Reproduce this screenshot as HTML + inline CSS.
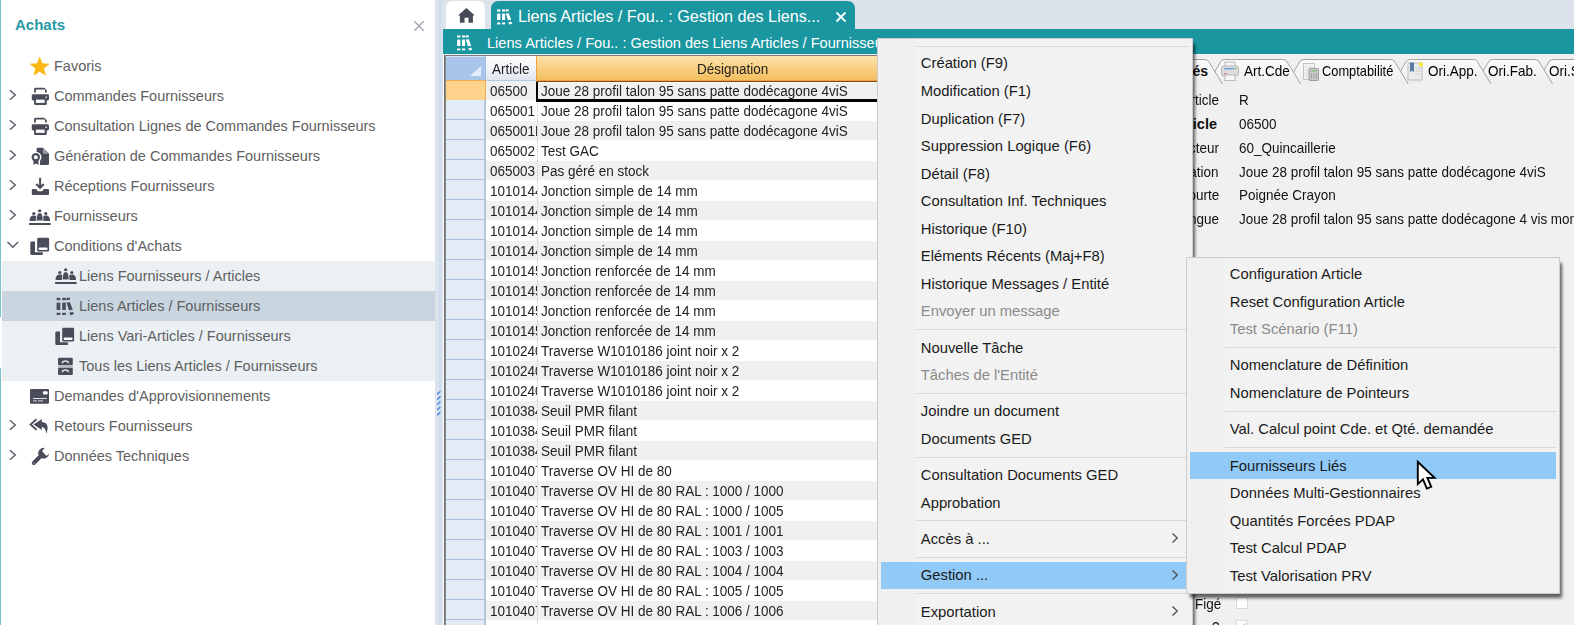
<!DOCTYPE html>
<html><head><meta charset="utf-8">
<style>
*{box-sizing:border-box;margin:0;padding:0}
html,body{width:1574px;height:625px;overflow:hidden;background:#dce3ea;font-family:"Liberation Sans",sans-serif;position:relative}
.abs{position:absolute}
.t{position:absolute;white-space:nowrap;line-height:1}
/* sidebar */
#side{position:absolute;left:0;top:0;width:435px;height:625px;background:#fff}
#side .bl{position:absolute;left:0;width:1px;background:#7cc3c9}
.srow{position:absolute;left:2px;width:433px;height:30px}
.stx{position:absolute;font-size:14.5px;color:#606060;white-space:nowrap;line-height:1}
.chev{position:absolute;left:9px;width:7px;height:7px;border-right:1.6px solid #5a5e68;border-bottom:1.6px solid #5a5e68}
/* splitter */
#split{position:absolute;left:435px;top:0;width:9px;height:625px;background:#dce3ea}
/* tabs */
/* grid */
/* right panel */
/* menus */
.mi{position:absolute;font-size:14.8px;color:#1a1a1a;white-space:nowrap;line-height:1}
.mi.dis{color:#8a8a8a}
.sep{position:absolute;height:1px;background:#d7d7d7}
.gtx{font-size:15.5px;color:#222;transform:scaleX(0.87);transform-origin:0 0}
.rtx{font-size:14.5px;color:#111;transform:scaleX(0.93);transform-origin:0 0}
.hl{position:absolute;background:#91c9f7}
</style></head><body>

<div id="side">
  <div class="bl" style="top:0;height:317px"></div>
  <div class="bl" style="top:368px;height:257px"></div>
  <div class="t" style="left:15px;top:17px;font-size:15px;font-weight:bold;color:#2799a6">Achats</div>
<svg class="abs" style="left:413px;top:20px" width="12" height="12" viewBox="0 0 12 12"><path d="M1.3 1.3 L10.7 10.7 M10.7 1.3 L1.3 10.7" stroke="#9da3aa" stroke-width="1.3"/></svg>
<!--SIDE-->
<div class="srow" style="top:51px;">
<svg class="abs" style="left:26px;top:4px" width="26" height="24" viewBox="0 0 26 24"><path d="M11.65 2.50 L14.06 8.78 L20.78 9.13 L15.55 13.37 L17.29 19.87 L11.65 16.20 L6.01 19.87 L7.75 13.37 L2.52 9.13 L9.24 8.78 Z" fill="#fbb713" stroke="#fbb713" stroke-width="0.9" stroke-linejoin="round"/></svg>
<div class="stx" style="left:52px;top:0;line-height:30px">Favoris</div>
</div>
<div class="srow" style="top:81px;">
<svg class="abs" style="left:5px;top:7px" width="12" height="14" viewBox="0 0 12 14"><path d="M2.8 2.3 L8.3 7 L2.8 11.7" fill="none" stroke="#5b5e6a" stroke-width="1.5"/></svg>
<svg class="abs" style="left:26px;top:4px" width="26" height="24" viewBox="0 0 26 24"><path d="M6.1 7.5V4.2a1.4 1.4 0 0 1 1.4-1.4h8.8l2.5 2.5v2.2h-1.8V4.6H7.9v2.9z" fill="#4a4d59"/><rect x="3.8" y="9.2" width="17.2" height="6.2" rx="1.4" fill="#4a4d59"/><rect x="17.4" y="11.4" width="1.6" height="1.6" fill="#c8cad0"/><path d="M6.1 14.5h12.7v4.3a1.2 1.2 0 0 1-1.2 1.2H7.3a1.2 1.2 0 0 1-1.2-1.2z" fill="#4a4d59"/><rect x="8" y="14.6" width="8.6" height="3.3" fill="#fff"/></svg>
<div class="stx" style="left:52px;top:0;line-height:30px">Commandes Fournisseurs</div>
</div>
<div class="srow" style="top:111px;">
<svg class="abs" style="left:5px;top:7px" width="12" height="14" viewBox="0 0 12 14"><path d="M2.8 2.3 L8.3 7 L2.8 11.7" fill="none" stroke="#5b5e6a" stroke-width="1.5"/></svg>
<svg class="abs" style="left:26px;top:4px" width="26" height="24" viewBox="0 0 26 24"><path d="M6.1 7.5V4.2a1.4 1.4 0 0 1 1.4-1.4h8.8l2.5 2.5v2.2h-1.8V4.6H7.9v2.9z" fill="#4a4d59"/><rect x="3.8" y="9.2" width="17.2" height="6.2" rx="1.4" fill="#4a4d59"/><rect x="17.4" y="11.4" width="1.6" height="1.6" fill="#c8cad0"/><path d="M6.1 14.5h12.7v4.3a1.2 1.2 0 0 1-1.2 1.2H7.3a1.2 1.2 0 0 1-1.2-1.2z" fill="#4a4d59"/><rect x="8" y="14.6" width="8.6" height="3.3" fill="#fff"/></svg>
<div class="stx" style="left:52px;top:0;line-height:30px">Consultation Lignes de Commandes Fournisseurs</div>
</div>
<div class="srow" style="top:141px;">
<svg class="abs" style="left:5px;top:7px" width="12" height="14" viewBox="0 0 12 14"><path d="M2.8 2.3 L8.3 7 L2.8 11.7" fill="none" stroke="#5b5e6a" stroke-width="1.5"/></svg>
<svg class="abs" style="left:26px;top:4px" width="26" height="24" viewBox="0 0 26 24"><mask id="mgen"><rect width="24" height="24" fill="#fff"/><circle cx="7.8" cy="12.3" r="5.6" fill="#000"/><path d="M4 15 L4 21 L12 21 L12 15z" fill="#000"/></mask><path d="M9.8 2.7h5.2l6 6.1v10a1.2 1.2 0 0 1-1.2 1.2H9.8a1.2 1.2 0 0 1-1.2-1.2v-14.9a1.2 1.2 0 0 1 1.2-1.2z" fill="#4a4d59" mask="url(#mgen)"/><path d="M15 2.9v4.8a1 1 0 0 0 1 1h4.8z" fill="#9a9ca5"/><circle cx="7.8" cy="12.3" r="4.2" fill="#4a4d59"/><circle cx="7.8" cy="12.3" r="2" fill="#fff"/><path d="M5.5 15.5 L5.5 20 L8 18.6 L10.5 20 L10.5 15.5z" fill="#4a4d59"/></svg>
<div class="stx" style="left:52px;top:0;line-height:30px">Génération de Commandes Fournisseurs</div>
</div>
<div class="srow" style="top:171px;">
<svg class="abs" style="left:5px;top:7px" width="12" height="14" viewBox="0 0 12 14"><path d="M2.8 2.3 L8.3 7 L2.8 11.7" fill="none" stroke="#5b5e6a" stroke-width="1.5"/></svg>
<svg class="abs" style="left:26px;top:4px" width="26" height="24" viewBox="0 0 26 24"><rect x="11.1" y="2.8" width="2" height="9.5" fill="#4a4d59"/><path d="M8.3 9 L12.1 12.8 L15.8 9" fill="none" stroke="#4a4d59" stroke-width="2.1"/><path d="M4.8 14h3.4l1.6 2.3h4.4l1.6-2.3h4.2a1 1 0 0 1 1 1v4a1 1 0 0 1-1 1H4.8a1 1 0 0 1-1-1v-4a1 1 0 0 1 1-1z" fill="#4a4d59"/></svg>
<div class="stx" style="left:52px;top:0;line-height:30px">Réceptions Fournisseurs</div>
</div>
<div class="srow" style="top:201px;">
<svg class="abs" style="left:5px;top:7px" width="12" height="14" viewBox="0 0 12 14"><path d="M2.8 2.3 L8.3 7 L2.8 11.7" fill="none" stroke="#5b5e6a" stroke-width="1.5"/></svg>
<svg class="abs" style="left:24.5px;top:4.5px" width="26" height="24" viewBox="0 0 26 24"><rect x="1.9" y="16.9" width="21.9" height="2.1" rx=".8" fill="#4a4d59"/><rect x="11.2" y="3.4" width="3" height="2.7" rx=".6" fill="#4a4d59"/><circle cx="6.8" cy="7.5" r="1.6" fill="#4a4d59"/><circle cx="18.8" cy="7.5" r="1.6" fill="#4a4d59"/><path d="M2.6 14.9 C2.6 11 4.2 9.6 6.8 9.6 S11 11 11 14.9z" fill="#4a4d59"/><path d="M14.6 14.9 C14.6 11 16.2 9.6 18.8 9.6 S23 11 23 14.9z" fill="#4a4d59"/><path d="M9.3 14.9 C9.3 9.2 10.5 6.7 12.7 6.7 S16.1 9.2 16.1 14.9z" fill="#4a4d59" stroke="#fff" stroke-width="0.8"/></svg>
<div class="stx" style="left:52px;top:0;line-height:30px">Fournisseurs</div>
</div>
<div class="srow" style="top:231px;">
<svg class="abs" style="left:4px;top:9px" width="14" height="10" viewBox="0 0 14 10"><path d="M1.5 2 L6.8 7.2 L12.1 2" fill="none" stroke="#5b5e6a" stroke-width="1.5"/></svg>
<svg class="abs" style="left:26px;top:4px" width="26" height="24" viewBox="0 0 26 24"><rect x="9.2" y="2.8" width="11.9" height="13.7" rx="1.3" fill="#4a4d59"/><rect x="10.6" y="12.5" width="9" height="2.4" rx="1.2" fill="#fff"/><path d="M3.6 6.5h3.4v10.8h7.8v2.7H3.9a1.6 1.6 0 0 1-1.6-1.6V7.8a1.3 1.3 0 0 1 1.3-1.3z" fill="#4a4d59"/></svg>
<div class="stx" style="left:52px;top:0;line-height:30px">Conditions d'Achats</div>
</div>
<div class="srow" style="top:261px;background:#ebf0f4;">
<svg class="abs" style="left:51px;top:4px" width="26" height="24" viewBox="0 0 26 24"><rect x="1.9" y="16.9" width="21.9" height="2.1" rx=".8" fill="#4a4d59"/><rect x="11.2" y="3.4" width="3" height="2.7" rx=".6" fill="#4a4d59"/><circle cx="6.8" cy="7.5" r="1.6" fill="#4a4d59"/><circle cx="18.8" cy="7.5" r="1.6" fill="#4a4d59"/><path d="M2.6 14.9 C2.6 11 4.2 9.6 6.8 9.6 S11 11 11 14.9z" fill="#4a4d59"/><path d="M14.6 14.9 C14.6 11 16.2 9.6 18.8 9.6 S23 11 23 14.9z" fill="#4a4d59"/><path d="M9.3 14.9 C9.3 9.2 10.5 6.7 12.7 6.7 S16.1 9.2 16.1 14.9z" fill="#4a4d59" stroke="#fff" stroke-width="0.8"/></svg>
<div class="stx" style="left:77px;top:0;line-height:30px">Liens Fournisseurs / Articles</div>
</div>
<div class="srow" style="top:291px;background:#c9d6e0;">
<svg class="abs" style="left:51px;top:4px" width="26" height="24" viewBox="0 0 26 24"><g fill="#4a4d59"><rect x="3.6" y="2.8" width="3.7" height="2.4"/><rect x="3.6" y="7.6" width="3.7" height="7.4"/><rect x="3.6" y="17.8" width="3.7" height="2.2"/><rect x="9.2" y="2.8" width="3.6" height="2.4"/><rect x="9.2" y="7.6" width="3.6" height="7.4"/><rect x="9.2" y="17.8" width="3.6" height="2.2"/><path d="M13.2 2.9 L16.6 2.5 L17.2 4.8 L13.5 5.3z"/><path d="M13.5 7.6 L17 7.2 L19.8 14.8 L16 15.2z"/><path d="M16.5 17.6 L20 16.9 L20.9 19.3 L17.3 20.2z"/></g></svg>
<div class="stx" style="left:77px;top:0;line-height:30px">Liens Articles / Fournisseurs</div>
</div>
<div class="srow" style="top:321px;background:#ebf0f4;">
<svg class="abs" style="left:50.5px;top:3.5px" width="26" height="24" viewBox="0 0 26 24"><rect x="9.2" y="2.8" width="11.9" height="13.7" rx="1.3" fill="#4a4d59"/><rect x="10.6" y="12.5" width="9" height="2.4" rx="1.2" fill="#fff"/><path d="M3.6 6.5h3.4v10.8h7.8v2.7H3.9a1.6 1.6 0 0 1-1.6-1.6V7.8a1.3 1.3 0 0 1 1.3-1.3z" fill="#4a4d59"/></svg>
<div class="stx" style="left:77px;top:0;line-height:30px">Liens Vari-Articles / Fournisseurs</div>
</div>
<div class="srow" style="top:351px;background:#ebf0f4;">
<svg class="abs" style="left:51px;top:4px" width="26" height="24" viewBox="0 0 26 24"><rect x="5" y="2.8" width="14.8" height="7.4" rx="1.2" fill="#4a4d59"/><rect x="5" y="12.6" width="14.8" height="7.3" rx="1.2" fill="#4a4d59"/><rect x="5" y="10.2" width="14.8" height="2.4" fill="#b6bac2"/><path d="M9.3 8.2 Q9.3 6 12.4 6 T15.5 8.2" fill="none" stroke="#d9dbe0" stroke-width="1.4"/><path d="M9.3 17.3 Q9.3 15 12.4 15 T15.5 17.3" fill="none" stroke="#d9dbe0" stroke-width="1.4"/></svg>
<div class="stx" style="left:77px;top:0;line-height:30px">Tous les Liens Articles / Fournisseurs</div>
</div>
<div class="srow" style="top:381px;">
<svg class="abs" style="left:26px;top:4px" width="26" height="24" viewBox="0 0 26 24"><rect x="2" y="4" width="19" height="14.8" rx="1.2" fill="#4a4d59"/><rect x="14.9" y="6.3" width="4.8" height="3.1" rx="1.2" fill="#fff"/><rect x="5.1" y="13" width="13.5" height="1" fill="#e8e9ec"/><rect x="5.1" y="15.1" width="3.9" height="1.5" fill="#a9abb3"/><rect x="10" y="15.1" width="5" height="1.5" fill="#a9abb3"/></svg>
<div class="stx" style="left:52px;top:0;line-height:30px">Demandes d'Approvisionnements</div>
</div>
<div class="srow" style="top:411px;">
<svg class="abs" style="left:5px;top:7px" width="12" height="14" viewBox="0 0 12 14"><path d="M2.8 2.3 L8.3 7 L2.8 11.7" fill="none" stroke="#5b5e6a" stroke-width="1.5"/></svg>
<svg class="abs" style="left:26px;top:4px" width="26" height="24" viewBox="0 0 26 24"><path d="M8.6 4.1 L2.6 9.5 L8.6 14.9" fill="none" stroke="#4a4d59" stroke-width="1.9"/><path d="M5.6 9.5 L13.8 3.9 L13.8 7.1 C18.5 7.3 21.5 10.5 18.4 18.8 C17.8 14.5 16.5 12.3 13.8 12 L13.8 15.1 Z" fill="#4a4d59"/></svg>
<div class="stx" style="left:52px;top:0;line-height:30px">Retours Fournisseurs</div>
</div>
<div class="srow" style="top:441px;">
<svg class="abs" style="left:5px;top:7px" width="12" height="14" viewBox="0 0 12 14"><path d="M2.8 2.3 L8.3 7 L2.8 11.7" fill="none" stroke="#5b5e6a" stroke-width="1.5"/></svg>
<svg class="abs" style="left:26px;top:4px" width="26" height="24" viewBox="0 0 26 24"><mask id="mwr"><rect width="24" height="24" fill="#fff"/><path d="M17.6 2 L22.5 7 L18.5 11 L14 6z" fill="#000" transform="rotate(0)"/></mask><g mask="url(#mwr)"><circle cx="15.6" cy="8.2" r="5.4" fill="#4a4d59"/></g><path d="M13.3 10.5 L5.8 18" stroke="#4a4d59" stroke-width="4" stroke-linecap="round"/><circle cx="5.8" cy="18" r=".8" fill="#9a9ca5"/></svg>
<div class="stx" style="left:52px;top:0;line-height:30px">Données Techniques</div>
</div>
<!--/SIDE-->
</div>

<div id="split"><div class="abs" style="left:4px;top:0;width:1.5px;height:625px;background:#c9dcf3"></div>
<svg class="abs" style="left:1px;top:390px" width="6" height="26" viewBox="0 0 6 26"><g stroke="#3d7ee0" stroke-width="1.3" stroke-linecap="round"><path d="M1.5 4 L4 1.6"/><path d="M1.5 9.2 L4 6.8"/><path d="M1.5 14.4 L4 12"/><path d="M1.5 19.6 L4 17.2"/><path d="M1.5 24.8 L4 22.4"/></g></svg></div>

<!--TOP-->
<div class="abs" style="left:446px;top:1px;width:39px;height:28px;background:#fff;border-radius:6px 6px 0 0"></div>
<svg class="abs" style="left:457px;top:7px" width="19" height="17" viewBox="0 0 19 17"><path d="M9.4 1 L17.8 8.6 L15.9 8.6 L15.9 15.8 L11.5 15.8 L11.5 10.8 L7.6 10.8 L7.6 15.8 L2.9 15.8 L2.9 8.6 L1 8.6 Z" fill="#474b57"/></svg>
<div class="abs" style="left:491px;top:1px;width:364px;height:28px;background:#1a96a0;border-radius:7px 7px 0 0"></div>
<svg class="abs" style="left:494px;top:6.7px" width="20" height="20" viewBox="0 0 23 23"><g fill="#fff"><rect x="3.6" y="2.8" width="3.7" height="2.4"/><rect x="3.6" y="7.6" width="3.7" height="7.4"/><rect x="3.6" y="17.8" width="3.7" height="2.2"/><rect x="9.2" y="2.8" width="3.6" height="2.4"/><rect x="9.2" y="7.6" width="3.6" height="7.4"/><rect x="9.2" y="17.8" width="3.6" height="2.2"/><path d="M13.2 2.9 L16.6 2.5 L17.2 4.8 L13.5 5.3z"/><path d="M13.5 7.6 L17 7.2 L19.8 14.8 L16 15.2z"/><path d="M16.5 17.6 L20 16.9 L20.9 19.3 L17.3 20.2z"/></g></svg>
<div class="t" style="left:518px;top:8px;font-size:16.2px;color:#fff">Liens Articles / Fou.. : Gestion des Liens...</div>
<svg class="abs" style="left:835px;top:11px" width="12" height="12" viewBox="0 0 12 12"><path d="M1.5 1.5 L10.5 10.5 M10.5 1.5 L1.5 10.5" stroke="#fff" stroke-width="1.8"/></svg>
<div class="abs" style="left:443px;top:29px;width:1131px;height:25px;background:#1a96a0"></div>
<svg class="abs" style="left:454px;top:33.1px" width="20" height="20" viewBox="0 0 23 23"><g fill="#fff"><rect x="3.6" y="2.8" width="3.7" height="2.4"/><rect x="3.6" y="7.6" width="3.7" height="7.4"/><rect x="3.6" y="17.8" width="3.7" height="2.2"/><rect x="9.2" y="2.8" width="3.6" height="2.4"/><rect x="9.2" y="7.6" width="3.6" height="7.4"/><rect x="9.2" y="17.8" width="3.6" height="2.2"/><path d="M13.2 2.9 L16.6 2.5 L17.2 4.8 L13.5 5.3z"/><path d="M13.5 7.6 L17 7.2 L19.8 14.8 L16 15.2z"/><path d="M16.5 17.6 L20 16.9 L20.9 19.3 L17.3 20.2z"/></g></svg>
<div class="t" style="left:487px;top:36px;font-size:14.6px;color:#fff">Liens Articles / Fou.. : Gestion des Liens Articles / Fournisseurs</div>
<!--/TOP-->

<!--GRID-->
<div id="grid" style="position:absolute;left:443px;top:54px;width:450px;height:571px;overflow:hidden;background:#fff">
<div class="abs" style="left:0;top:0;width:450px;height:1px;background:#e9eef2"></div>
<div class="abs" style="left:1px;top:1px;width:449px;height:1px;background:#7c7c7c"></div>
<div class="abs" style="left:1px;top:1px;width:2px;height:570px;background:#8a8a8a"></div>
<div class="abs" style="left:1px;top:1px;width:1px;height:570px;background:#6e6e6e"></div>
<div class="abs" style="left:43px;top:27px;width:410px;height:19px;background:#f0f0f0"></div>
<div class="abs" style="left:3px;top:26px;width:40px;height:20px;background:#fdd38b;border-top:1px solid #f4ab52;border-right:1px solid #f4ab52"></div>
<div class="abs" style="left:47px;top:26px;width:47px;height:20px;overflow:hidden"><div class="t gtx" style="left:0;top:3.3px">06500</div></div>
<div class="t gtx" style="left:97.6px;top:29.3px">Joue 28 profil talon 95 sans patte dodécagone 4viS</div>
<div class="abs" style="left:94px;top:26px;width:1px;height:20px;border-left:1px dotted #c8c8c8"></div>
<div class="abs" style="left:43px;top:47px;width:410px;height:19px;background:#ffffff"></div>
<div class="abs" style="left:3px;top:46px;width:40px;height:20px;background:#e3ebf7;border-bottom:1px solid #a8c0dd;border-right:2px solid #b3c6dc"></div>
<div class="abs" style="left:47px;top:46px;width:47px;height:20px;overflow:hidden"><div class="t gtx" style="left:0;top:3.3px">065001</div></div>
<div class="t gtx" style="left:97.6px;top:49.3px">Joue 28 profil talon 95 sans patte dodécagone 4viS</div>
<div class="abs" style="left:94px;top:46px;width:1px;height:20px;border-left:1px dotted #c8c8c8"></div>
<div class="abs" style="left:43px;top:67px;width:410px;height:19px;background:#f0f0f0"></div>
<div class="abs" style="left:3px;top:66px;width:40px;height:20px;background:#e3ebf7;border-bottom:1px solid #a8c0dd;border-right:2px solid #b3c6dc"></div>
<div class="abs" style="left:47px;top:66px;width:47px;height:20px;overflow:hidden"><div class="t gtx" style="left:0;top:3.3px">065001B</div></div>
<div class="t gtx" style="left:97.6px;top:69.3px">Joue 28 profil talon 95 sans patte dodécagone 4viS</div>
<div class="abs" style="left:94px;top:66px;width:1px;height:20px;border-left:1px dotted #c8c8c8"></div>
<div class="abs" style="left:43px;top:87px;width:410px;height:19px;background:#ffffff"></div>
<div class="abs" style="left:3px;top:86px;width:40px;height:20px;background:#e3ebf7;border-bottom:1px solid #a8c0dd;border-right:2px solid #b3c6dc"></div>
<div class="abs" style="left:47px;top:86px;width:47px;height:20px;overflow:hidden"><div class="t gtx" style="left:0;top:3.3px">065002</div></div>
<div class="t gtx" style="left:97.6px;top:89.3px">Test GAC</div>
<div class="abs" style="left:94px;top:86px;width:1px;height:20px;border-left:1px dotted #c8c8c8"></div>
<div class="abs" style="left:43px;top:107px;width:410px;height:19px;background:#f0f0f0"></div>
<div class="abs" style="left:3px;top:106px;width:40px;height:20px;background:#e3ebf7;border-bottom:1px solid #a8c0dd;border-right:2px solid #b3c6dc"></div>
<div class="abs" style="left:47px;top:106px;width:47px;height:20px;overflow:hidden"><div class="t gtx" style="left:0;top:3.3px">065003</div></div>
<div class="t gtx" style="left:97.6px;top:109.3px">Pas géré en stock</div>
<div class="abs" style="left:94px;top:106px;width:1px;height:20px;border-left:1px dotted #c8c8c8"></div>
<div class="abs" style="left:43px;top:127px;width:410px;height:19px;background:#ffffff"></div>
<div class="abs" style="left:3px;top:126px;width:40px;height:20px;background:#e3ebf7;border-bottom:1px solid #a8c0dd;border-right:2px solid #b3c6dc"></div>
<div class="abs" style="left:47px;top:126px;width:47px;height:20px;overflow:hidden"><div class="t gtx" style="left:0;top:3.3px">1010144</div></div>
<div class="t gtx" style="left:97.6px;top:129.3px">Jonction simple de 14 mm</div>
<div class="abs" style="left:94px;top:126px;width:1px;height:20px;border-left:1px dotted #c8c8c8"></div>
<div class="abs" style="left:43px;top:147px;width:410px;height:19px;background:#f0f0f0"></div>
<div class="abs" style="left:3px;top:146px;width:40px;height:20px;background:#e3ebf7;border-bottom:1px solid #a8c0dd;border-right:2px solid #b3c6dc"></div>
<div class="abs" style="left:47px;top:146px;width:47px;height:20px;overflow:hidden"><div class="t gtx" style="left:0;top:3.3px">1010144</div></div>
<div class="t gtx" style="left:97.6px;top:149.3px">Jonction simple de 14 mm</div>
<div class="abs" style="left:94px;top:146px;width:1px;height:20px;border-left:1px dotted #c8c8c8"></div>
<div class="abs" style="left:43px;top:167px;width:410px;height:19px;background:#ffffff"></div>
<div class="abs" style="left:3px;top:166px;width:40px;height:20px;background:#e3ebf7;border-bottom:1px solid #a8c0dd;border-right:2px solid #b3c6dc"></div>
<div class="abs" style="left:47px;top:166px;width:47px;height:20px;overflow:hidden"><div class="t gtx" style="left:0;top:3.3px">1010144</div></div>
<div class="t gtx" style="left:97.6px;top:169.3px">Jonction simple de 14 mm</div>
<div class="abs" style="left:94px;top:166px;width:1px;height:20px;border-left:1px dotted #c8c8c8"></div>
<div class="abs" style="left:43px;top:187px;width:410px;height:19px;background:#f0f0f0"></div>
<div class="abs" style="left:3px;top:186px;width:40px;height:20px;background:#e3ebf7;border-bottom:1px solid #a8c0dd;border-right:2px solid #b3c6dc"></div>
<div class="abs" style="left:47px;top:186px;width:47px;height:20px;overflow:hidden"><div class="t gtx" style="left:0;top:3.3px">1010144</div></div>
<div class="t gtx" style="left:97.6px;top:189.3px">Jonction simple de 14 mm</div>
<div class="abs" style="left:94px;top:186px;width:1px;height:20px;border-left:1px dotted #c8c8c8"></div>
<div class="abs" style="left:43px;top:207px;width:410px;height:19px;background:#ffffff"></div>
<div class="abs" style="left:3px;top:206px;width:40px;height:20px;background:#e3ebf7;border-bottom:1px solid #a8c0dd;border-right:2px solid #b3c6dc"></div>
<div class="abs" style="left:47px;top:206px;width:47px;height:20px;overflow:hidden"><div class="t gtx" style="left:0;top:3.3px">1010145</div></div>
<div class="t gtx" style="left:97.6px;top:209.3px">Jonction renforcée de 14 mm</div>
<div class="abs" style="left:94px;top:206px;width:1px;height:20px;border-left:1px dotted #c8c8c8"></div>
<div class="abs" style="left:43px;top:227px;width:410px;height:19px;background:#f0f0f0"></div>
<div class="abs" style="left:3px;top:226px;width:40px;height:20px;background:#e3ebf7;border-bottom:1px solid #a8c0dd;border-right:2px solid #b3c6dc"></div>
<div class="abs" style="left:47px;top:226px;width:47px;height:20px;overflow:hidden"><div class="t gtx" style="left:0;top:3.3px">1010145</div></div>
<div class="t gtx" style="left:97.6px;top:229.3px">Jonction renforcée de 14 mm</div>
<div class="abs" style="left:94px;top:226px;width:1px;height:20px;border-left:1px dotted #c8c8c8"></div>
<div class="abs" style="left:43px;top:247px;width:410px;height:19px;background:#ffffff"></div>
<div class="abs" style="left:3px;top:246px;width:40px;height:20px;background:#e3ebf7;border-bottom:1px solid #a8c0dd;border-right:2px solid #b3c6dc"></div>
<div class="abs" style="left:47px;top:246px;width:47px;height:20px;overflow:hidden"><div class="t gtx" style="left:0;top:3.3px">1010145</div></div>
<div class="t gtx" style="left:97.6px;top:249.3px">Jonction renforcée de 14 mm</div>
<div class="abs" style="left:94px;top:246px;width:1px;height:20px;border-left:1px dotted #c8c8c8"></div>
<div class="abs" style="left:43px;top:267px;width:410px;height:19px;background:#f0f0f0"></div>
<div class="abs" style="left:3px;top:266px;width:40px;height:20px;background:#e3ebf7;border-bottom:1px solid #a8c0dd;border-right:2px solid #b3c6dc"></div>
<div class="abs" style="left:47px;top:266px;width:47px;height:20px;overflow:hidden"><div class="t gtx" style="left:0;top:3.3px">1010145</div></div>
<div class="t gtx" style="left:97.6px;top:269.3px">Jonction renforcée de 14 mm</div>
<div class="abs" style="left:94px;top:266px;width:1px;height:20px;border-left:1px dotted #c8c8c8"></div>
<div class="abs" style="left:43px;top:287px;width:410px;height:19px;background:#ffffff"></div>
<div class="abs" style="left:3px;top:286px;width:40px;height:20px;background:#e3ebf7;border-bottom:1px solid #a8c0dd;border-right:2px solid #b3c6dc"></div>
<div class="abs" style="left:47px;top:286px;width:47px;height:20px;overflow:hidden"><div class="t gtx" style="left:0;top:3.3px">1010240</div></div>
<div class="t gtx" style="left:97.6px;top:289.3px">Traverse W1010186 joint noir x 2</div>
<div class="abs" style="left:94px;top:286px;width:1px;height:20px;border-left:1px dotted #c8c8c8"></div>
<div class="abs" style="left:43px;top:307px;width:410px;height:19px;background:#f0f0f0"></div>
<div class="abs" style="left:3px;top:306px;width:40px;height:20px;background:#e3ebf7;border-bottom:1px solid #a8c0dd;border-right:2px solid #b3c6dc"></div>
<div class="abs" style="left:47px;top:306px;width:47px;height:20px;overflow:hidden"><div class="t gtx" style="left:0;top:3.3px">1010240</div></div>
<div class="t gtx" style="left:97.6px;top:309.3px">Traverse W1010186 joint noir x 2</div>
<div class="abs" style="left:94px;top:306px;width:1px;height:20px;border-left:1px dotted #c8c8c8"></div>
<div class="abs" style="left:43px;top:327px;width:410px;height:19px;background:#ffffff"></div>
<div class="abs" style="left:3px;top:326px;width:40px;height:20px;background:#e3ebf7;border-bottom:1px solid #a8c0dd;border-right:2px solid #b3c6dc"></div>
<div class="abs" style="left:47px;top:326px;width:47px;height:20px;overflow:hidden"><div class="t gtx" style="left:0;top:3.3px">1010240</div></div>
<div class="t gtx" style="left:97.6px;top:329.3px">Traverse W1010186 joint noir x 2</div>
<div class="abs" style="left:94px;top:326px;width:1px;height:20px;border-left:1px dotted #c8c8c8"></div>
<div class="abs" style="left:43px;top:347px;width:410px;height:19px;background:#f0f0f0"></div>
<div class="abs" style="left:3px;top:346px;width:40px;height:20px;background:#e3ebf7;border-bottom:1px solid #a8c0dd;border-right:2px solid #b3c6dc"></div>
<div class="abs" style="left:47px;top:346px;width:47px;height:20px;overflow:hidden"><div class="t gtx" style="left:0;top:3.3px">1010384</div></div>
<div class="t gtx" style="left:97.6px;top:349.3px">Seuil PMR filant</div>
<div class="abs" style="left:94px;top:346px;width:1px;height:20px;border-left:1px dotted #c8c8c8"></div>
<div class="abs" style="left:43px;top:367px;width:410px;height:19px;background:#ffffff"></div>
<div class="abs" style="left:3px;top:366px;width:40px;height:20px;background:#e3ebf7;border-bottom:1px solid #a8c0dd;border-right:2px solid #b3c6dc"></div>
<div class="abs" style="left:47px;top:366px;width:47px;height:20px;overflow:hidden"><div class="t gtx" style="left:0;top:3.3px">1010384</div></div>
<div class="t gtx" style="left:97.6px;top:369.3px">Seuil PMR filant</div>
<div class="abs" style="left:94px;top:366px;width:1px;height:20px;border-left:1px dotted #c8c8c8"></div>
<div class="abs" style="left:43px;top:387px;width:410px;height:19px;background:#f0f0f0"></div>
<div class="abs" style="left:3px;top:386px;width:40px;height:20px;background:#e3ebf7;border-bottom:1px solid #a8c0dd;border-right:2px solid #b3c6dc"></div>
<div class="abs" style="left:47px;top:386px;width:47px;height:20px;overflow:hidden"><div class="t gtx" style="left:0;top:3.3px">1010384</div></div>
<div class="t gtx" style="left:97.6px;top:389.3px">Seuil PMR filant</div>
<div class="abs" style="left:94px;top:386px;width:1px;height:20px;border-left:1px dotted #c8c8c8"></div>
<div class="abs" style="left:43px;top:407px;width:410px;height:19px;background:#ffffff"></div>
<div class="abs" style="left:3px;top:406px;width:40px;height:20px;background:#e3ebf7;border-bottom:1px solid #a8c0dd;border-right:2px solid #b3c6dc"></div>
<div class="abs" style="left:47px;top:406px;width:47px;height:20px;overflow:hidden"><div class="t gtx" style="left:0;top:3.3px">1010407</div></div>
<div class="t gtx" style="left:97.6px;top:409.3px">Traverse OV HI de 80</div>
<div class="abs" style="left:94px;top:406px;width:1px;height:20px;border-left:1px dotted #c8c8c8"></div>
<div class="abs" style="left:43px;top:427px;width:410px;height:19px;background:#f0f0f0"></div>
<div class="abs" style="left:3px;top:426px;width:40px;height:20px;background:#e3ebf7;border-bottom:1px solid #a8c0dd;border-right:2px solid #b3c6dc"></div>
<div class="abs" style="left:47px;top:426px;width:47px;height:20px;overflow:hidden"><div class="t gtx" style="left:0;top:3.3px">1010407</div></div>
<div class="t gtx" style="left:97.6px;top:429.3px">Traverse OV HI de 80 RAL : 1000 / 1000</div>
<div class="abs" style="left:94px;top:426px;width:1px;height:20px;border-left:1px dotted #c8c8c8"></div>
<div class="abs" style="left:43px;top:447px;width:410px;height:19px;background:#ffffff"></div>
<div class="abs" style="left:3px;top:446px;width:40px;height:20px;background:#e3ebf7;border-bottom:1px solid #a8c0dd;border-right:2px solid #b3c6dc"></div>
<div class="abs" style="left:47px;top:446px;width:47px;height:20px;overflow:hidden"><div class="t gtx" style="left:0;top:3.3px">1010407</div></div>
<div class="t gtx" style="left:97.6px;top:449.3px">Traverse OV HI de 80 RAL : 1000 / 1005</div>
<div class="abs" style="left:94px;top:446px;width:1px;height:20px;border-left:1px dotted #c8c8c8"></div>
<div class="abs" style="left:43px;top:467px;width:410px;height:19px;background:#f0f0f0"></div>
<div class="abs" style="left:3px;top:466px;width:40px;height:20px;background:#e3ebf7;border-bottom:1px solid #a8c0dd;border-right:2px solid #b3c6dc"></div>
<div class="abs" style="left:47px;top:466px;width:47px;height:20px;overflow:hidden"><div class="t gtx" style="left:0;top:3.3px">1010407</div></div>
<div class="t gtx" style="left:97.6px;top:469.3px">Traverse OV HI de 80 RAL : 1001 / 1001</div>
<div class="abs" style="left:94px;top:466px;width:1px;height:20px;border-left:1px dotted #c8c8c8"></div>
<div class="abs" style="left:43px;top:487px;width:410px;height:19px;background:#ffffff"></div>
<div class="abs" style="left:3px;top:486px;width:40px;height:20px;background:#e3ebf7;border-bottom:1px solid #a8c0dd;border-right:2px solid #b3c6dc"></div>
<div class="abs" style="left:47px;top:486px;width:47px;height:20px;overflow:hidden"><div class="t gtx" style="left:0;top:3.3px">1010407</div></div>
<div class="t gtx" style="left:97.6px;top:489.3px">Traverse OV HI de 80 RAL : 1003 / 1003</div>
<div class="abs" style="left:94px;top:486px;width:1px;height:20px;border-left:1px dotted #c8c8c8"></div>
<div class="abs" style="left:43px;top:507px;width:410px;height:19px;background:#f0f0f0"></div>
<div class="abs" style="left:3px;top:506px;width:40px;height:20px;background:#e3ebf7;border-bottom:1px solid #a8c0dd;border-right:2px solid #b3c6dc"></div>
<div class="abs" style="left:47px;top:506px;width:47px;height:20px;overflow:hidden"><div class="t gtx" style="left:0;top:3.3px">1010407</div></div>
<div class="t gtx" style="left:97.6px;top:509.3px">Traverse OV HI de 80 RAL : 1004 / 1004</div>
<div class="abs" style="left:94px;top:506px;width:1px;height:20px;border-left:1px dotted #c8c8c8"></div>
<div class="abs" style="left:43px;top:527px;width:410px;height:19px;background:#ffffff"></div>
<div class="abs" style="left:3px;top:526px;width:40px;height:20px;background:#e3ebf7;border-bottom:1px solid #a8c0dd;border-right:2px solid #b3c6dc"></div>
<div class="abs" style="left:47px;top:526px;width:47px;height:20px;overflow:hidden"><div class="t gtx" style="left:0;top:3.3px">1010407</div></div>
<div class="t gtx" style="left:97.6px;top:529.3px">Traverse OV HI de 80 RAL : 1005 / 1005</div>
<div class="abs" style="left:94px;top:526px;width:1px;height:20px;border-left:1px dotted #c8c8c8"></div>
<div class="abs" style="left:43px;top:547px;width:410px;height:19px;background:#f0f0f0"></div>
<div class="abs" style="left:3px;top:546px;width:40px;height:20px;background:#e3ebf7;border-bottom:1px solid #a8c0dd;border-right:2px solid #b3c6dc"></div>
<div class="abs" style="left:47px;top:546px;width:47px;height:20px;overflow:hidden"><div class="t gtx" style="left:0;top:3.3px">1010407</div></div>
<div class="t gtx" style="left:97.6px;top:549.3px">Traverse OV HI de 80 RAL : 1006 / 1006</div>
<div class="abs" style="left:94px;top:546px;width:1px;height:20px;border-left:1px dotted #c8c8c8"></div>
<div class="abs" style="left:43px;top:567px;width:410px;height:19px;background:#ffffff"></div>
<div class="abs" style="left:3px;top:566px;width:40px;height:20px;background:#e3ebf7;border-bottom:1px solid #a8c0dd;border-right:2px solid #b3c6dc"></div>
<div class="abs" style="left:47px;top:566px;width:47px;height:20px;overflow:hidden"><div class="t gtx" style="left:0;top:3.3px">1010407</div></div>
<div class="t gtx" style="left:97.6px;top:569.3px">Traverse OV HI de 80 RAL : 1007 / 1007</div>
<div class="abs" style="left:94px;top:566px;width:1px;height:20px;border-left:1px dotted #c8c8c8"></div>
<div class="abs" style="left:3px;top:2px;width:40px;height:24px;background:#a9c5e9;border-top:1px solid #d5e3f5;border-right:1px solid #9fbbe0"></div>
<svg class="abs" style="left:26px;top:11px" width="13" height="12" viewBox="0 0 13 12"><path d="M1 11 L12 11 L12 1 Z" fill="#e3ecf7"/></svg>
<div class="abs" style="left:43px;top:2px;width:51px;height:25px;background:linear-gradient(#fbfcfd,#f4f6f9 45%,#dfe6ef);border-bottom:1px solid #b7c9dd;border-right:1px solid #cfd9e4"></div>
<div class="t gtx" style="left:49px;top:6.8px;color:#1e1e1e">Article</div>
<div class="abs" style="left:93px;top:2px;width:360px;height:26px;background:linear-gradient(#fde2ae,#f8cf80 50%,#f3bd5c);border-left:1px solid #f0a040;border-bottom:1px solid #7a4c1e;box-shadow:inset 0 -1px 0 #f0a040"></div>
<div class="t gtx" style="left:254px;top:6.8px;color:#1e1e1e">Désignation</div>
<div class="abs" style="left:93px;top:28px;width:400px;height:1px;background:#fafafa"></div>
<div class="abs" style="left:93px;top:28px;width:400px;height:20px;border-left:2px solid #000;border-bottom:3px solid #000"></div>
</div>
<!--/GRID-->


<!--RP-->
<div class="abs" style="left:877px;top:54px;width:697px;height:571px;background:#f0f0f0;overflow:hidden">
</div>
<svg class="abs" style="left:0;top:0" width="1574" height="90" viewBox="0 0 1574 90"><defs><linearGradient id="tg" x1="0" y1="0" x2="0" y2="1"><stop offset="0" stop-color="#fbfbfb"/><stop offset="1" stop-color="#eeeeee"/></linearGradient></defs>
<path d="M1535.9 84 L1549.4 61.2 Q1550.8000000000002 59.5 1553.4 59.5 L1638 59.5 Q1640.6 59.5 1642 61.2 L1656 84" fill="url(#tg)" stroke="#a3a3a3" stroke-width="1"/>
<path d="M1475.5 84 L1489 61.2 Q1490.4 59.5 1493 59.5 L1534.6 59.5 Q1537.1999999999998 59.5 1538.6 61.2 L1552.6 84" fill="url(#tg)" stroke="#a3a3a3" stroke-width="1"/>
<path d="M1392.9 84 L1406.4 61.2 Q1407.8000000000002 59.5 1410.4 59.5 L1473 59.5 Q1475.6 59.5 1477 61.2 L1491 84" fill="url(#tg)" stroke="#a3a3a3" stroke-width="1"/>
<path d="M1286.5 84 L1300 61.2 Q1301.4 59.5 1304 59.5 L1390.3 59.5 Q1392.8999999999999 59.5 1394.3 61.2 L1408.3 84" fill="url(#tg)" stroke="#a3a3a3" stroke-width="1"/>
<path d="M1207.5 84 L1221 61.2 Q1222.4 59.5 1225 59.5 L1282.7 59.5 Q1285.3 59.5 1286.7 61.2 L1300.7 84" fill="url(#tg)" stroke="#a3a3a3" stroke-width="1"/>
<path d="M1084.5 84 L1098 61.2 Q1099.4 59.5 1102 59.5 L1204.5 59.5 Q1207.1 59.5 1208.5 61.2 L1222.5 84" fill="url(#tg)" stroke="#a3a3a3" stroke-width="1"/>
</svg>
<div class="t rtx" style="left:1180px;top:64px;font-weight:bold;transform:none;font-size:14px">Liés</div>
<div class="t rtx" style="left:1244px;top:64px;color:#000">Art.Cde</div>
<div class="t rtx" style="left:1322px;top:64px;color:#000;transform:scaleX(0.885)">Comptabilité</div>
<div class="t rtx" style="left:1428px;top:64px;color:#000">Ori.App.</div>
<div class="t rtx" style="left:1488px;top:64px;color:#000">Ori.Fab.</div>
<div class="t rtx" style="left:1549px;top:64px;color:#000">Ori.Sto.</div>
<svg class="abs" style="left:1220px;top:61px" width="20" height="21" viewBox="0 0 20 21"><rect x="5" y="1" width="10" height="5" fill="#f4f4f4" stroke="#b8b8b8" stroke-width="1"/><rect x="1.5" y="5" width="17" height="10" rx="2" fill="#dcdcdc" stroke="#b5b5b5" stroke-width="1"/><rect x="4" y="7" width="10" height="1.4" fill="#6f9ee0"/><rect x="14.5" y="7" width="2" height="1.4" fill="#78c878"/><rect x="4" y="12" width="3" height="1" fill="#e07070"/><rect x="5" y="14" width="10" height="5.5" fill="#f7f7f7" stroke="#b8b8b8" stroke-width="1"/></svg>
<svg class="abs" style="left:1302px;top:62px" width="18" height="20" viewBox="0 0 18 20"><rect x="1.5" y="1.5" width="11" height="16" fill="#f2f2f2" stroke="#c4c4c4"/><path d="M3 5h8M3 8h8M3 11h8M3 14h8" stroke="#d8d8d8"/><rect x="7" y="6.5" width="9.5" height="12" rx="1" fill="#c9c9c9" stroke="#9c9c9c"/><rect x="8.5" y="8" width="6.5" height="1.6" fill="#8cc38c"/><path d="M9.5 11.5v5M12 11.5v5M14.3 11.5v5" stroke="#9a9a9a"/></svg>
<svg class="abs" style="left:1407px;top:61px" width="18" height="21" viewBox="0 0 18 21"><rect x="1" y="2" width="14" height="17" fill="#ececec" stroke="#b9b9b9"/><path d="M3 1.5h4v10l-2-2-2 2z" fill="#5d7ba8"/><path d="M8.5 7h5M8.5 10h5M8.5 13h5" stroke="#cdcdcd"/><circle cx="14" cy="3.5" r="2.3" fill="#f5e94a"/><path d="M2 19.5h13" stroke="#d5d5d5" stroke-width="1.5"/></svg>
<div class="t rtx" style="right:355px;top:93.23px;transform-origin:100% 0">Type Article</div>
<div class="t rtx" style="left:1239px;top:93.23px">R</div>
<div class="t rtx" style="right:357px;top:117.03px;font-weight:bold;transform:none;transform-origin:100% 0">Code Article</div>
<div class="t rtx" style="left:1239px;top:117.03px">06500</div>
<div class="t rtx" style="right:355px;top:140.83px;transform-origin:100% 0">Secteur</div>
<div class="t rtx" style="left:1239px;top:140.83px">60_Quincaillerie</div>
<div class="t rtx" style="right:355px;top:164.63px;transform-origin:100% 0">Désignation</div>
<div class="t rtx" style="left:1239px;top:164.63px">Joue 28 profil talon 95 sans patte dodécagone 4viS</div>
<div class="t rtx" style="right:355px;top:188.43px;transform-origin:100% 0">Désignation Courte</div>
<div class="t rtx" style="left:1239px;top:188.43px">Poignée Crayon</div>
<div class="t rtx" style="right:355px;top:212.23px;transform-origin:100% 0">Désignation Longue</div>
<div class="t rtx" style="left:1239px;top:212.23px">Joue 28 profil talon 95 sans patte dodécagone 4 vis montée</div>
<div class="t rtx" style="left:1195px;top:596.53px">Figé</div>
<div class="abs" style="left:1236px;top:597px;width:12px;height:12px;background:#fff;border:1px solid #dadada"></div>
<div class="t rtx" style="left:1212px;top:620.33px">?</div>
<div class="abs" style="left:1236px;top:620px;width:12px;height:12px;background:#fff;border:1px solid #dadada"></div>
<svg class="abs" style="left:1237px;top:621px" width="10" height="10" viewBox="0 0 10 10"><path d="M2 5.5 L4 7.5 L8.5 2.5" fill="none" stroke="#bdbdbd" stroke-width="1.2"/></svg>
<!--/RP-->
<!--MENUS-->
<div class="abs" style="left:877px;top:38px;width:316px;height:600px;background:#f0f0f0;border:1px solid #cccccc;box-shadow:3px 5px 3px -1px rgba(0,0,0,.6)"></div>
<div class="abs" style="left:915px;top:39px;width:277px;height:600px;background:#f2f2f2"></div>
<div class="hl" style="left:881px;top:561.7px;width:308px;height:27.2px"></div>
<div class="sep" style="left:916px;top:45.5px;width:273px"></div>
<div class="sep" style="left:916px;top:329.1px;width:273px"></div>
<div class="sep" style="left:916px;top:392.8px;width:273px"></div>
<div class="sep" style="left:916px;top:456.8px;width:273px"></div>
<div class="sep" style="left:916px;top:520.3px;width:273px"></div>
<div class="sep" style="left:916px;top:556.8px;width:273px"></div>
<div class="sep" style="left:916px;top:592.9px;width:273px"></div>
<div class="mi" style="left:920.8px;top:56.47px">Création (F9)</div>
<div class="mi" style="left:920.8px;top:84.07px">Modification (F1)</div>
<div class="mi" style="left:920.8px;top:111.57px">Duplication (F7)</div>
<div class="mi" style="left:920.8px;top:139.07px">Suppression Logique (F6)</div>
<div class="mi" style="left:920.8px;top:166.57px">Détail (F8)</div>
<div class="mi" style="left:920.8px;top:194.07px">Consultation Inf. Techniques</div>
<div class="mi" style="left:920.8px;top:221.57px">Historique (F10)</div>
<div class="mi" style="left:920.8px;top:249.07px">Eléments Récents (Maj+F8)</div>
<div class="mi" style="left:920.8px;top:276.57px">Historique Messages / Entité</div>
<div class="mi dis" style="left:920.8px;top:304.07px">Envoyer un message</div>
<div class="mi" style="left:920.8px;top:340.87px">Nouvelle Tâche</div>
<div class="mi dis" style="left:920.8px;top:368.37px">Tâches de l'Entité</div>
<div class="mi" style="left:920.8px;top:404.47px">Joindre un document</div>
<div class="mi" style="left:920.8px;top:431.97px">Documents GED</div>
<div class="mi" style="left:920.8px;top:468.27px">Consultation Documents GED</div>
<div class="mi" style="left:920.8px;top:495.57px">Approbation</div>
<div class="mi" style="left:920.8px;top:531.87px">Accès à ...</div>
<div class="mi" style="left:920.8px;top:568.37px">Gestion ...</div>
<div class="mi" style="left:920.8px;top:604.57px">Exportation</div>
<svg class="abs" style="left:1170px;top:532.3px" width="10" height="12" viewBox="0 0 10 12"><path d="M2.5 1.5 L7.3 6 L2.5 10.5" fill="none" stroke="#505050" stroke-width="1.3"/></svg>
<svg class="abs" style="left:1170px;top:569px" width="10" height="12" viewBox="0 0 10 12"><path d="M2.5 1.5 L7.3 6 L2.5 10.5" fill="none" stroke="#505050" stroke-width="1.3"/></svg>
<svg class="abs" style="left:1170px;top:605px" width="10" height="12" viewBox="0 0 10 12"><path d="M2.5 1.5 L7.3 6 L2.5 10.5" fill="none" stroke="#505050" stroke-width="1.3"/></svg>
<div class="abs" style="left:1186px;top:257px;width:374px;height:336.5px;background:#f0f0f0;border:1px solid #cccccc;box-shadow:3px 5px 3px -1px rgba(0,0,0,.6)"></div>
<div class="abs" style="left:1225px;top:258px;width:334px;height:334px;background:#f2f2f2"></div>
<div class="hl" style="left:1190px;top:452px;width:366px;height:27px"></div>
<div class="sep" style="left:1225px;top:346.7px;width:331px"></div>
<div class="sep" style="left:1225px;top:410.7px;width:331px"></div>
<div class="sep" style="left:1225px;top:447.0px;width:331px"></div>
<div class="mi" style="left:1229.8px;top:267.37px">Configuration Article</div>
<div class="mi" style="left:1229.8px;top:294.87px">Reset Configuration Article</div>
<div class="mi dis" style="left:1229.8px;top:322.37px">Test Scénario (F11)</div>
<div class="mi" style="left:1229.8px;top:358.27px">Nomenclature de Définition</div>
<div class="mi" style="left:1229.8px;top:385.77px">Nomenclature de Pointeurs</div>
<div class="mi" style="left:1229.8px;top:422.27px">Val. Calcul point Cde. et Qté. demandée</div>
<div class="mi" style="left:1229.8px;top:458.67px">Fournisseurs Liés</div>
<div class="mi" style="left:1229.8px;top:486.17px">Données Multi-Gestionnaires</div>
<div class="mi" style="left:1229.8px;top:513.67px">Quantités Forcées PDAP</div>
<div class="mi" style="left:1229.8px;top:541.17px">Test Calcul PDAP</div>
<div class="mi" style="left:1229.8px;top:568.67px">Test Valorisation PRV</div>
<svg class="abs" style="left:1416px;top:460px" width="24" height="34" viewBox="0 0 24 34"><path d="M1.8 1.8 L1.8 24.2 L7 19.4 L10.9 28.6 L15.2 26.8 L11.4 17.9 L18.6 17.9 Z" fill="#fff" stroke="#000" stroke-width="1.9" stroke-linejoin="miter"/></svg>
<!--/MENUS-->
</body></html>
